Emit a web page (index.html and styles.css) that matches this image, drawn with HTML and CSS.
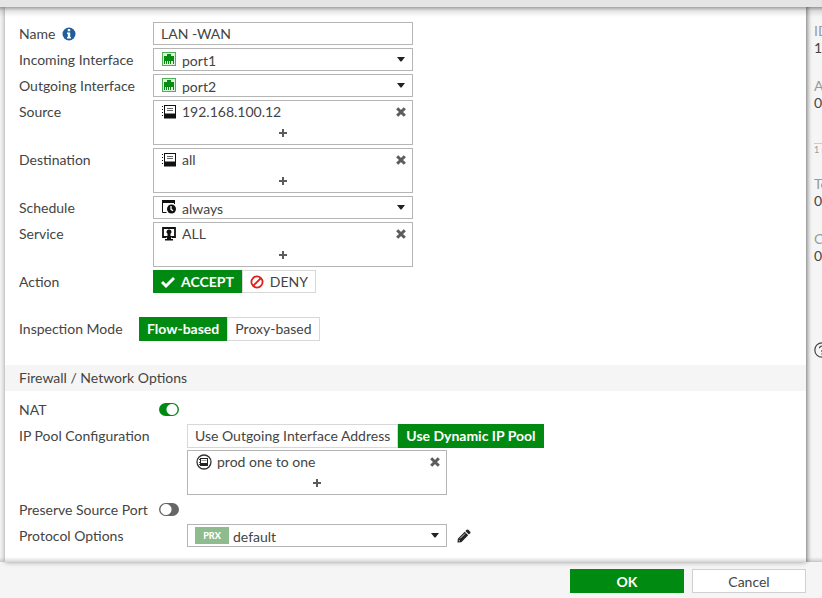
FILE: index.html
```html
<!DOCTYPE html>
<html lang="en">
<head>
<meta charset="utf-8">
<meta name="viewport" content="width=device-width, initial-scale=1">
<title>Edit Policy</title>
<link rel="stylesheet" href="styles.css">
</head>
<body>
<svg class="sprite" aria-hidden="true">
  <symbol id="port" viewBox="0 0 14 14">
    <rect x="0.5" y="0.5" width="13" height="13" fill="#dff2df" stroke="#4fae54"/>
    <path fill="#078a12" d="M5 2h4v2h3v5H2V4h3z"/>
    <path stroke="#078a12" d="M2.500 9v3M4.500 9v3M6.500 9v3M8.500 9v3M11.500 9v3"/>
  </symbol>
  <symbol id="address" viewBox="0 0 14 14">
    <path fill="#111" fill-rule="evenodd" d="M2 0h12v13.500H2zM3 1v8h10V1z"/>
    <path fill="#111" d="M2 8.500h12v4.500H2z"/>
    <path stroke="#666" d="M5 3.500h6M5 5.500h6"/>
    <path stroke="#111" d="M0 1.500h1M0 4.500h1M0 7.500h1M0 10.500h1"/>
  </symbol>
  <symbol id="schedule" viewBox="0 0 14 14">
    <path fill="#111" d="M0 0h13v3H0z"/>
    <path fill="none" stroke="#111" d="M.5 2v10.500h4M12.500 2v2"/>
    <circle cx="9.500" cy="9" r="4.500" fill="#111"/>
    <path fill="none" stroke="#fff" stroke-width="1.300" d="M9 6v3.300l2 1.500"/>
  </symbol>
  <symbol id="service" viewBox="0 0 14 14">
    <path fill="none" stroke="#111" stroke-width="1.800" d="M4 10H1V1h12v9h-3"/>
    <path fill="#111" d="M7 2.500a2.300 2.300 0 0 1 1.500 4.200V9H11v1.500H9V12h2v1.500H3V12h2v-1.500H3V9h2.500V6.700A2.300 2.300 0 0 1 7 2.500z"/>
  </symbol>
  <symbol id="pool" viewBox="0 0 16 16">
    <circle cx="8" cy="8" r="7" fill="#fff" stroke="#333" stroke-width="1.300"/>
    <path fill="#222" fill-rule="evenodd" d="M4 4h8v8H4zM5 5v4h6V5z"/>
    <path stroke="#999" d="M5.500 6.500h5"/>
    <path stroke="#444" d="M3 5.500h1M3 8.500h1M3 10.500h1"/>
  </symbol>
  <symbol id="caret" viewBox="0 0 8 5"><path fill="#222" d="M0 0h8L4.500 4.600h-1z"/></symbol>
  <symbol id="cross" viewBox="0 0 10 10"><path fill="none" stroke="#5c5c5c" stroke-width="3" d="M1.200 1.200l7.600 7.600M8.800 1.200L1.200 8.800"/></symbol>
  <symbol id="plus" viewBox="0 0 8 8"><path fill="none" stroke="#5c5c5c" stroke-width="2" d="M4 0v8M0 4h8"/></symbol>
</svg>

<header class="titlebar"><h1>Edit Policy</h1></header>

<div class="body">
  <main class="panel">
    <form class="form" id="policy">
      <div class="row">
        <div class="name-label">
          <label for="name">Name</label>
          <svg class="info" viewBox="0 0 14 14" aria-hidden="true">
            <circle cx="7" cy="7" r="6.500" fill="#205f99"/>
            <path fill="#fff" d="M5.800 2h2.400v2.200H5.800zM5 5.500h3.200V10H9v1.500H5V10h.8V7H5z"/>
          </svg>
        </div>
        <input class="box text" id="name" type="text" value="LAN -WAN">
      </div>
      <div class="row">
        <label for="incoming">Incoming Interface</label>
        <div class="picker">
          <svg class="icon"><use href="#port"/></svg>
          <select class="box" id="incoming"><option>port1</option></select>
          <svg class="caret"><use href="#caret"/></svg>
        </div>
      </div>
      <div class="row">
        <label for="outgoing">Outgoing Interface</label>
        <div class="picker">
          <svg class="icon"><use href="#port"/></svg>
          <select class="box" id="outgoing"><option>port2</option></select>
          <svg class="caret"><use href="#caret"/></svg>
        </div>
      </div>
      <div class="row">
        <span id="source">Source</span>
        <div class="box multi" role="group" aria-labelledby="source">
          <div class="entry"><svg class="icon"><use href="#address"/></svg><span>192.168.100.12</span>
            <button type="button" aria-label="Remove"><svg class="cross"><use href="#cross"/></svg></button></div>
          <button class="add" type="button" aria-label="Add"><svg class="plus"><use href="#plus"/></svg></button>
        </div>
      </div>
      <div class="row">
        <span id="destination">Destination</span>
        <div class="box multi" role="group" aria-labelledby="destination">
          <div class="entry"><svg class="icon"><use href="#address"/></svg><span>all</span>
            <button type="button" aria-label="Remove"><svg class="cross"><use href="#cross"/></svg></button></div>
          <button class="add" type="button" aria-label="Add"><svg class="plus"><use href="#plus"/></svg></button>
        </div>
      </div>
      <div class="row">
        <label for="schedule-select">Schedule</label>
        <div class="picker">
          <svg class="icon"><use href="#schedule"/></svg>
          <select class="box" id="schedule-select"><option>always</option></select>
          <svg class="caret"><use href="#caret"/></svg>
        </div>
      </div>
      <div class="row">
        <span id="service-label">Service</span>
        <div class="box multi" role="group" aria-labelledby="service-label">
          <div class="entry"><svg class="icon"><use href="#service"/></svg><span>ALL</span>
            <button type="button" aria-label="Remove"><svg class="cross"><use href="#cross"/></svg></button></div>
          <button class="add" type="button" aria-label="Add"><svg class="plus"><use href="#plus"/></svg></button>
        </div>
      </div>
      <div class="row">
        <span id="action">Action</span>
        <div class="segments" role="radiogroup" aria-labelledby="action">
          <label><input type="radio" name="action" checked>
            <svg class="icon" viewBox="0 0 14 14"><path fill="none" stroke="#fff" stroke-width="3" d="M1 7l4 4 8-8"/></svg>ACCEPT</label>
          <label><input type="radio" name="action">
            <svg class="icon" viewBox="0 0 14 14"><g fill="none" stroke="#e0201b" stroke-width="1.800"><circle cx="7" cy="7" r="5.600"/><path d="M3 11l8-8"/></g></svg>DENY</label>
        </div>
      </div>
      <div class="row inspection">
        <span id="inspection">Inspection Mode</span>
        <div class="segments" role="radiogroup" aria-labelledby="inspection">
          <label><input type="radio" name="inspection" checked>Flow-based</label>
          <label><input type="radio" name="inspection">Proxy-based</label>
        </div>
      </div>

      <h2 class="section">Firewall / Network Options</h2>

      <div class="row switch-row">
        <label for="nat">NAT</label>
        <input class="switch" id="nat" type="checkbox" checked>
      </div>
      <div class="row wide">
        <span id="ippool">IP Pool Configuration</span>
        <div class="stack">
          <div class="segments" role="radiogroup" aria-labelledby="ippool">
            <label><input type="radio" name="ippool">Use Outgoing Interface Address</label>
            <label><input type="radio" name="ippool" checked>Use Dynamic IP Pool</label>
          </div>
          <div class="box multi" role="group" aria-labelledby="ippool">
            <div class="entry"><svg class="icon pool"><use href="#pool"/></svg><span>prod one to one</span>
              <button type="button" aria-label="Remove"><svg class="cross"><use href="#cross"/></svg></button></div>
            <button class="add" type="button" aria-label="Add"><svg class="plus"><use href="#plus"/></svg></button>
          </div>
        </div>
      </div>
      <div class="row switch-row">
        <label for="preserve">Preserve Source Port</label>
        <input class="switch" id="preserve" type="checkbox">
      </div>
      <div class="row wide">
        <label for="protocol">Protocol Options</label>
        <div class="with-edit">
          <div class="picker tagged">
            <span class="tag">PRX</span>
            <select class="box" id="protocol"><option>default</option></select>
            <svg class="caret"><use href="#caret"/></svg>
          </div>
          <button class="edit" type="button" aria-label="Edit">
            <svg class="icon" viewBox="0 0 14 14">
              <path fill="#222" d="M9.700.8q.8-.8 1.600 0l1.900 1.900q.8.800 0 1.600l-1.300 1.300-3.500-3.500zM7.700 2.800l3.500 3.500L4.300 13.200.5 13.500l.3-3.800z"/>
              <path fill="none" stroke="#fff" stroke-width=".8" d="M3 9.500l5-5M1.700 11l1.300 1.300"/>
            </svg>
          </button>
        </div>
      </div>
    </form>
  </main>

  <aside class="stats">
    <dl>
      <dt>ID</dt><dd>1</dd>
      <dt>A</dt><dd>0</dd>
    </dl>
    <div class="axis">1 m</div>
    <dl>
      <dt>To</dt><dd>0</dd>
      <dt>C</dt><dd>0</dd>
    </dl>
    <svg class="help" viewBox="0 0 16 16" aria-hidden="true">
      <g fill="none" stroke="#444" stroke-width="1.200"><circle cx="8" cy="8" r="7.200"/><path d="M5.500 6.300Q5.700 4 8 4t2.500 2.200Q10.500 7.500 8 8.500V10M8 11.200v1.300"/></g>
    </svg>
  </aside>
</div>

<footer class="actions">
  <button class="primary" type="submit" form="policy">OK</button>
  <button type="button">Cancel</button>
</footer>
</body>
</html>
```

FILE: styles.css
```css
* {
  box-sizing: border-box;
}

body {
  margin: 0;
  min-height: 100vh;
  display: flex;
  flex-direction: column;
  background: #f5f5f5;
  color: #444;
  font: 14px/23px Lato, sans-serif;
}

button,
input,
select {
  margin: 0;
  color: inherit;
  font: inherit;
}

button {
  padding: 0;
  border: 0;
  background: none;
}

svg {
  display: block;
}

.sprite {
  position: absolute;
  width: 0;
  height: 0;
}

.titlebar {
  position: relative;
  z-index: 2;
  display: flex;
  align-items: flex-end;
  height: 7px;
  padding: 0 10px 6px;
  overflow: hidden;
  background: #e5e5e5;
}

.titlebar h1 {
  margin: 0;
  font-size: 14px;
  font-weight: 400;
  line-height: 16px;
}

.body {
  position: relative;
  flex: 1;
  display: flex;
  padding-left: 5px;
}

/* Shadows that the title bar and the footer cast on the scrolled content. */
.body::before,
.body::after {
  content: "";
  position: absolute;
  z-index: 1;
  left: 0;
  right: 0;
  pointer-events: none;
}

.body::before {
  top: 0;
  height: 10px;
  background: linear-gradient(rgba(0, 0, 0, 0.36), rgba(0, 0, 0, 0.1) 40%, transparent);
}

.body::after {
  bottom: 0;
  height: 5px;
  background: linear-gradient(transparent, rgba(0, 0, 0, 0.16));
}

.panel {
  flex: 1;
  min-width: 0;
  background: #fff;
  box-shadow: 0 0 5px rgba(0, 0, 0, 0.4);
}

.form {
  display: flex;
  flex-direction: column;
  gap: 3px;
  padding: 15px 0 14px;
}

.row {
  display: grid;
  grid-template-columns: 134px 260px;
  padding: 0 14px;
}

.row.wide {
  grid-template-columns: 168px auto;
}

.row.switch-row {
  grid-template-columns: 140px auto;
  align-items: center;
}

.row.inspection {
  grid-template-columns: 120px auto;
  margin: 21px 0;
}

.name-label {
  display: flex;
  align-items: center;
  gap: 7px;
}

.info {
  width: 14px;
  height: 14px;
}

.box {
  width: 260px;
  height: 23px;
  border: 1px solid #b5b5b5;
  border-radius: 0;
  background: #fff;
}

.text {
  padding: 0 7px;
}

.picker {
  position: relative;
  width: 260px;
}

.picker select {
  display: block;
  padding: 0 28px 2px;
  appearance: none;
}

.picker.tagged select {
  padding-left: 45px;
}

.icon {
  width: 14px;
  height: 14px;
}

.picker .icon {
  position: absolute;
  left: 9px;
  top: 4px;
}

.picker .caret {
  position: absolute;
  right: 8px;
  top: 9px;
  width: 8px;
  height: 5px;
  pointer-events: none;
}

.tag {
  position: absolute;
  left: 8px;
  top: 3px;
  width: 34px;
  background: #8fbc8f;
  color: #fff;
  font-size: 9px;
  font-weight: 900;
  line-height: 17px;
  text-align: center;
}

.multi {
  height: 45px;
}

.entry {
  display: flex;
  align-items: center;
  gap: 6px;
  height: 21px;
  padding: 0 6px 0 8px;
  line-height: 21px;
}

.entry span {
  flex: 1;
}

.entry .pool {
  width: 16px;
  height: 16px;
}

.entry .pool + span {
  margin-left: -1px;
}

.cross {
  width: 10px;
  height: 10px;
}

.add {
  display: flex;
  align-items: center;
  justify-content: center;
  width: 100%;
  height: 22px;
}

.plus {
  width: 8px;
  height: 8px;
}

.segments {
  display: flex;
}

.segments label {
  position: relative;
  display: flex;
  align-items: center;
  gap: 6px;
  padding: 0 7px;
  border: 1px solid #d8d8d8;
  background: #fff;
  line-height: 21px;
  white-space: nowrap;
}

.inspection .segments label,
.stack .segments label {
  line-height: 22px;
}

.segments input {
  position: absolute;
  opacity: 0;
}

.segments label:has(:checked) {
  border-color: #008a11;
  background: #008a11;
  color: #fff;
  font-weight: 700;
}

.section {
  margin: 0 0 4px;
  padding: 0 14px;
  background: #f5f5f5;
  font-size: 14px;
  font-weight: 400;
  line-height: 26px;
}

.switch {
  width: 20px;
  height: 13px;
  border-radius: 7px;
  appearance: none;
  background: radial-gradient(circle at 7px 50%, #fff 5px, #666 6px);
}

.switch:checked {
  background: radial-gradient(circle at 13px 50%, #fff 5px, #008a11 6px);
}

.stack {
  display: flex;
  flex-direction: column;
  gap: 2px;
}

.with-edit {
  display: flex;
  align-items: center;
  gap: 10px;
}

.stats {
  position: relative;
  flex: 0 0 16px;
  padding: 15px 0 0 8px;
  overflow: hidden;
  box-shadow: inset 4px 0 4px -2px rgba(0, 0, 0, 0.25);
  white-space: nowrap;
}

.stats dl {
  margin: 0;
}

.stats dt {
  color: #999;
  line-height: 17px;
}

.stats dd {
  margin: 0 0 20px;
  line-height: 18px;
}

.axis {
  margin: 31px 0 19px;
  border-top: 1px solid #ccc;
  color: #999;
  font-size: 9px;
  line-height: 12px;
}

.help {
  width: 16px;
  height: 16px;
  margin-top: 77px;
}

.actions {
  display: flex;
  justify-content: flex-end;
  gap: 8px;
  padding: 7px 16px 5px;
  background: #f5f5f5;
}

.actions button {
  width: 114px;
  height: 24px;
  border: 1px solid #d0d0d0;
  background: #fff;
}

.actions .primary {
  border-color: #008a11;
  background: #008a11;
  color: #fff;
  font-weight: 700;
}
```
